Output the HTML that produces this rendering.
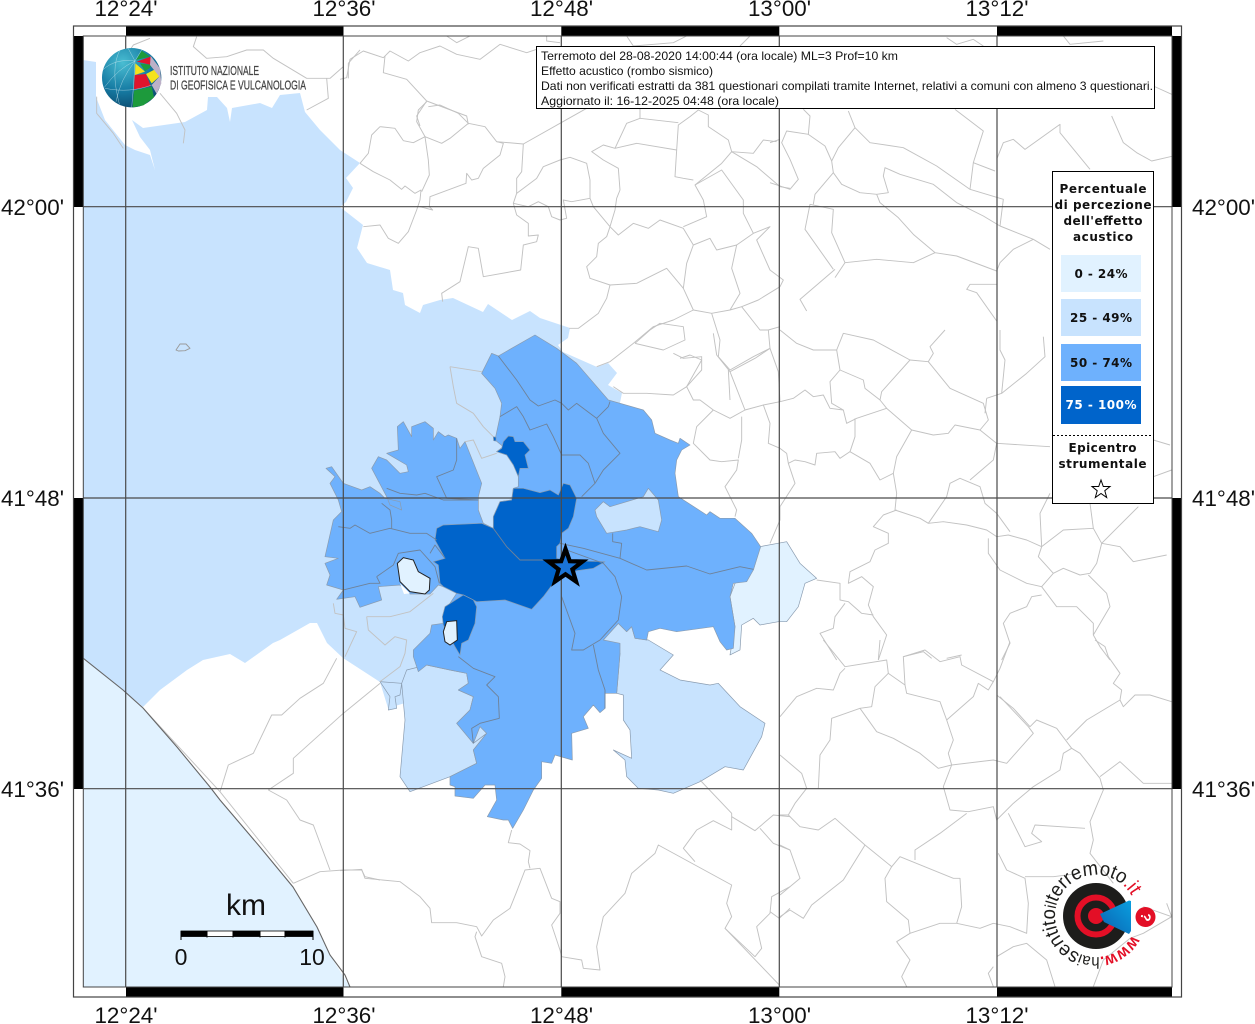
<!DOCTYPE html>
<html><head><meta charset="utf-8"><title>Terremoto</title>
<style>
html,body{margin:0;padding:0;background:#fff}
svg{display:block;font-family:"Liberation Sans",sans-serif}
.l path{fill:none;stroke:#c2c2c2;stroke-width:.95;vector-effect:non-scaling-stroke;stroke-linejoin:round}
.c path{fill:none;stroke:#6f8299;stroke-width:.9;vector-effect:non-scaling-stroke;stroke-linejoin:round}
.f path{stroke:#8a9cb0;stroke-width:.7;vector-effect:non-scaling-stroke;stroke-linejoin:round}
.ax{font-size:22.4px;fill:#111}
.lg{font-family:"DejaVu Sans",sans-serif;font-weight:bold;font-size:12px;text-anchor:middle;fill:#111}
.tb{font-size:12px;fill:#111}
</style></head><body>
<svg width="1255" height="1024" viewBox="0 0 1255 1024" xmlns="http://www.w3.org/2000/svg">
<defs>
<clipPath id="mc"><rect x="83" y="36" width="1089" height="951"/></clipPath>
<radialGradient id="gb" cx=".35" cy=".25" r=".85"><stop offset="0" stop-color="#49bdd2"/><stop offset=".55" stop-color="#167ba3"/><stop offset="1" stop-color="#0a4468"/></radialGradient>
<linearGradient id="wd" x1="0" x2="1" y1="1" y2="0"><stop offset="0" stop-color="#0b62b0"/><stop offset="1" stop-color="#0a9fe0"/></linearGradient>
<path id="arc" d="M1132.2,935.2 A41,41 0 1 1 1132.5,897.4"/>
</defs>
<rect width="1255" height="1024" fill="#fff"/>
<g clip-path="url(#mc)">
<path d="M83,658 123,690 143,708 177,747 210,787 220,800 260,847 293,887 317,927 330,955 350,987 83,987Z" fill="#e1f2ff"/>
<path fill="#c8e3fe" d="M83,60 96,62 96,97 105,120 125,145 135,150 150,155 155,170 150,150 140,137 132,120 143,128 185,122 207,110 208,97 217,97 227,108 230,122 232,108 260,103 272,108 280,95 300,93 305,112 320,130 340,150 360,163 346,178 353,188 346,202 340,207 363,225 357,248 367,263 390,270 393,290 403,293 405,305 420,313 423,305 440,300 453,298 483,312 488,304 512,320 530,311 540,318 570,328 568,338 558,345 563,352 597,367 608,363 617,373 608,385 622,393 600,500 590,600 450,690 388,708 380,682 343,658 327,643 317,623 310,623 280,640 273,643 245,663 230,654 203,660 187,670 160,690 143,707 123,690 83,658Z"/>
<g transform="translate(310,320) scale(.33333)">
<g class="f">
<path fill="#c8e3fe" stroke="none" d="M485,1225 515,1215 535,1240 490,1290Z"/>
<path fill="#c8e3fe" d="M290,1050 350,1035 420,1050 470,1060 475,1090 445,1110 490,1130 480,1170 440,1210 490,1270 530,1240 490,1290 500,1330 420,1370 300,1415 270,1370 285,1200 275,1090Z"/>
<path fill="#c8e3fe" d="M210,1085 275,1090 270,1125 255,1130 260,1165 235,1170 240,1130Z"/>
<path fill="#c8e3fe" d="M880,960 925,910 950,935 965,920 975,955 1015,960 1090,1005 1050,1050 1110,1080 1200,1095 1225,1090 1290,1160 1365,1210 1355,1250 1300,1350 1245,1340 1170,1385 1090,1420 1045,1410 985,1405 950,1370 945,1320 910,1290 965,1315 960,1230 940,1200 940,1125 920,1120 930,1000Z"/>
<path fill="#e1f2ff" d="M1350,680 1430,665 1470,730 1520,775 1485,790 1465,860 1430,905 1405,905 1350,915 1330,895 1295,915 1290,990 1260,1005 1275,920 1260,830 1275,790 1330,750Z"/>
<path fill="#6eb1fd" d="M545,100 565,108 675,45 740,85 800,130 895,240 1000,270 1025,300 1035,340 1080,360 1105,370 1110,355 1140,375 1115,390 1100,420 1095,460 1105,530 1190,585 1200,575 1230,595 1275,595 1325,640 1352,680 1330,750 1310,785 1270,790 1260,830 1275,920 1270,985 1250,990 1230,965 1210,920 1100,935 1050,925 1015,935 1010,960 975,955 965,920 950,935 925,910 880,960 930,970 930,1000 920,1120 885,1120 885,1165 870,1178 850,1155 820,1190 835,1225 785,1240 787,1320 735,1305 725,1330 695,1325 695,1375 670,1410 640,1470 608,1525 595,1500 580,1500 532,1490 560,1440 555,1395 525,1395 490,1435 435,1428 435,1400 420,1395 420,1370 500,1330 490,1290 530,1240 510,1220 490,1270 440,1210 480,1170 490,1130 445,1110 475,1090 470,1060 420,1050 350,1035 325,1055 310,1010 310,990 360,940 365,915 400,910 400,880 440,820 400,800 385,795 360,822 300,822 270,795 205,800 215,840 150,862 135,830 80,838 100,810 50,795 60,765 45,730 85,715 45,710 70,600 95,575 85,540 60,490 75,470 48,445 65,440 100,490 155,510 180,500 210,520 225,535 270,545 275,570 240,555 230,530 185,445 205,410 230,420 270,460 295,455 290,435 230,400 265,390 262,320 280,305 305,350 305,320 345,305 370,325 370,360 385,335 405,350 415,345 440,355 450,385 465,365 515,490 505,530 505,570 520,610 550,625 550,590 570,545 605,540 610,505 625,500 625,470 615,440 590,400 560,395 580,380 555,360 570,290 575,250 555,205 515,160Z"/>
<path fill="#c8e3fe" d="M855,570 880,545 900,560 1000,530 1015,505 1045,540 1055,600 1045,635 990,620 950,630 890,640 860,590Z"/>
<path fill="#0064cb" d="M380,625 400,615 515,610 550,625 550,590 570,545 605,540 610,505 640,505 690,518 720,510 745,525 760,490 780,495 800,535 790,590 775,625 755,640 750,670 740,680 740,715 780,722 885,725 850,745 800,752 730,790 700,830 665,868 585,840 500,845 460,825 440,820 400,800 390,790 385,735 370,725 405,715 375,660Z"/>
<path fill="#0064cb" d="M405,860 460,825 490,840 500,860 495,910 475,960 455,970 450,1005 435,980 400,915 397,890Z"/>
<path fill="#0064cb" d="M595,348 610,350 615,365 640,365 660,390 645,405 655,445 630,445 625,470 610,435 590,405 560,395 575,385 580,365Z"/>
<path fill="#0064cb" d="M550,350 558,352 558,363 551,362Z"/>
</g>
<path d="M262,730 280,713 310,720 325,755 360,775 358,810 345,822 300,815 270,785Z" fill="#e1f2ff" stroke="#222" stroke-width="1" vector-effect="non-scaling-stroke"/>
<path d="M270,790 300,820 282,822Z" fill="#fff"/>
<path d="M400,935 410,905 440,902 442,960 420,975 405,965Z" fill="#e1f2ff" stroke="#222" stroke-width="1" vector-effect="non-scaling-stroke"/>
<g class="c">
<path d="M565,108 620,180 660,240 685,258 735,240 755,250 775,270 800,250 860,295 895,260 900,245"/>
<path d="M570,290 620,260 640,290 660,330 710,312 730,350 755,405 810,405 835,430 855,490 815,530"/>
<path d="M860,295 880,340 930,400 880,450 855,490"/>
<path d="M440,355 440,420 430,450 380,470 410,535 505,540"/>
<path d="M230,505 270,520 320,525 345,520 400,540 440,540 505,540"/>
<path d="M85,620 120,625 135,615 180,640 240,625 300,640 350,640 380,660"/>
<path d="M245,625 245,600 240,570 215,550"/>
<path d="M200,770 250,735 265,700 330,690 375,740 388,790"/>
<path d="M200,770 210,790 180,790 100,810"/>
<path d="M360,700 375,675 405,715"/>
<path d="M750,670 820,685 930,715 1010,750 1130,738 1200,762 1290,740 1330,748"/>
<path d="M930,715 935,670 908,665 908,640"/>
<path d="M770,690 880,730 915,770 935,830 925,900 870,960 820,990 785,990 795,940 755,830"/>
<path d="M850,975 865,1050 885,1110 885,1165"/>
<path d="M550,625 590,680 630,720 700,720"/>
<path d="M445,1010 490,1045 555,1070 530,1095 565,1130 568,1195 510,1210 485,1225 490,1270"/>
</g>
<g class="l">
<path d="M420,140 430,200 440,250 490,280 520,320 550,350"/>
<path d="M420,140 515,155"/>
<path d="M465,365 490,360 515,415 560,400"/>
<path d="M70,850 75,880 100,885 105,925 140,935 105,1010"/>
<path d="M170,890 175,930 225,975 255,950 290,960 285,1000 270,1040 210,1085"/>
<path d="M170,890 240,890 300,875 370,820"/>
<path d="M-402,90 -390,72 -372,72 -360,85 -375,92 -395,93Z" style="stroke:#9a9a9a"/>
</g>
</g>
<g class="l" transform="translate(340,100) scale(.33333)">
<path d="M60,190 100,215 150,240 185,268 195,258 225,280 243,270 240,300 230,330 205,395 175,430 145,415 120,375 70,380"/>
<path d="M60,190 85,160 95,105 120,80 165,85 190,122 220,128 255,110 265,180 268,225 245,275"/>
<path d="M255,110 230,65 235,30 260,5"/>
<path d="M255,110 305,130 330,115 385,70 355,40 300,15 265,20"/>
<path d="M385,70 435,80 470,125 550,132 660,70 740,25"/>
<path d="M470,125 490,130 480,165 430,205 415,235 395,240 380,220 378,250 270,290 268,320 278,330 240,320"/>
<path d="M550,132 545,215 530,235 530,280 520,310 530,345 565,370 565,408 595,405 590,425 550,435 542,510 430,530 415,445 385,440 360,545 305,580 308,605"/>
<path d="M520,310 565,320 595,305 625,320 635,350 660,360 680,355 670,300 695,305 750,295 760,320 810,380 825,330 830,295 840,270 835,205 790,180 755,155 790,135 825,145 890,130 1010,150"/>
<path d="M530,280 590,235 610,200 660,180 690,172 740,190 750,240 750,295"/>
<path d="M810,380 835,405 880,370 925,385 960,360 1030,385 1060,435 1110,415 1130,450 1190,435 1240,400 1210,340 1210,300 1145,210 1065,255 1090,300 1100,350 1030,380"/>
<path d="M810,380 800,410 775,430 770,470 740,500 750,535 810,555 890,550 980,505 1030,565 1060,630 1000,660 940,680 880,730 810,785 770,800"/>
<path d="M810,555 800,595 775,640 715,685 688,685"/>
<path d="M1060,630 1115,640 1170,630 1200,580 1175,505 1190,435"/>
<path d="M1060,435 1040,490 1030,565"/>
<path d="M1115,640 1140,720 1135,770 1170,810 1240,770 1290,745 1285,690 1320,680"/>
<path d="M1170,630 1205,620 1260,690 1285,690"/>
<path d="M1240,400 1290,380 1250,420 1290,510 1330,540 1320,560 1255,600 1205,620"/>
<path d="M1010,150 1005,230 1030,235 1060,240"/>
<path d="M1010,150 1015,75 1050,50 1075,30 1105,45 1105,80 1165,120 1175,155 1145,190 1065,255"/>
<path d="M1175,155 1240,160 1270,120 1310,125"/>
<path d="M1175,155 1250,200 1320,260 1350,265"/>
<path d="M825,145 860,70 900,55 1015,68"/>
<path d="M900,25 900,55"/>
<path d="M885,730 970,750 1035,720 1030,680 960,670 930,690 885,730"/>
<path d="M1000,760 1030,775 1085,770 1085,810 1040,860 1000,885 920,880 850,880 820,860"/>
<path d="M1165,810 1170,900"/>
</g>
<g class="l" transform="translate(770,36) scale(.33333)">
<path d="M100,220 120,240 115,295 50,285 35,320 60,370 85,430 60,460 0,440"/>
<path d="M115,295 165,330 185,375"/>
<path d="M235,225 255,275 205,335 185,375 190,410 135,475 130,505"/>
<path d="M255,275 300,320 400,335 500,390 600,460 700,490 690,570"/>
<path d="M555,220 640,285 610,380 600,460"/>
<path d="M610,380 675,405"/>
<path d="M190,410 215,445 270,470 320,475 355,470 340,420 345,395 390,415 490,445 560,500 640,540 690,570 740,590 790,610 840,640"/>
<path d="M320,475 330,500 385,545 430,595 495,650 560,660 680,705"/>
<path d="M495,650 430,680 320,670 225,680 195,725"/>
<path d="M225,680 185,590 190,520 120,505 105,580 190,700"/>
<path d="M195,700 90,790 110,825"/>
<path d="M680,370 700,320 730,310 765,340 870,265 870,290 960,400"/>
<path d="M680,705 690,680 730,640 790,610"/>
<path d="M1025,240 1060,320 1100,350 1145,375 1210,360"/>
<path d="M1150,150 1205,175"/>
<path d="M680,745 600,745 590,760 620,770 680,855"/>
<path d="M0,320 30,310"/>
<path d="M880,0 900,25 1000,15"/>
<path d="M530,5 560,25 610,10 640,30"/>
</g>
<g class="l" transform="translate(680,330) scale(.33333)">
<path d="M300,0 350,40 400,60 470,60 490,10 580,30 690,90 745,95 760,70 750,50 795,0"/>
<path d="M470,60 480,120 550,150 555,175 600,210 620,235 695,300 760,315 805,310 825,285 900,300 950,340"/>
<path d="M690,90 605,185 600,210"/>
<path d="M745,95 810,175 910,220 925,270 900,300"/>
<path d="M480,120 450,155 455,220 490,240 500,280 530,265 620,235"/>
<path d="M525,265 525,320 510,365 570,400 600,450 640,430 650,380 695,300"/>
<path d="M300,215 340,205 375,180 400,200 430,195 450,235 490,240"/>
<path d="M510,365 480,385 465,365 410,370 405,405 375,395 345,390 325,400 320,370 300,355 265,340 270,280 250,225 195,240 150,125 110,75 100,10"/>
<path d="M250,225 300,215"/>
<path d="M150,125 225,85 270,55 295,125 300,215"/>
<path d="M195,240 150,265 100,240 60,210 40,210 20,170 65,90 30,75 0,85"/>
<path d="M100,240 50,290 40,340 90,390 125,395 175,390 170,420 135,470 170,540 165,560"/>
<path d="M185,260 185,330 175,385"/>
<path d="M325,400 345,460 300,530 300,570 270,640"/>
<path d="M640,430 650,490 645,540 720,565 745,580 790,575 860,585 920,600 950,620 985,615 1040,630 1085,650"/>
<path d="M650,540 610,555 580,590 625,610 625,640 585,660 570,695 510,725 505,760 545,740 580,770 565,825 580,860 620,915 595,990"/>
<path d="M745,580 800,500 810,460 840,445 900,470 915,520 950,550 990,605"/>
<path d="M870,450 940,390 950,340 1110,350"/>
<path d="M925,625 925,670 960,720 1040,760 1085,770 1120,730 1075,680 1085,650 1150,600 1240,595 1265,640 1250,700 1230,730 1200,735 1150,715 1120,730"/>
<path d="M1085,650 1080,550 1110,490"/>
<path d="M1240,595 1230,520"/>
<path d="M1265,640 1375,530"/>
<path d="M1265,640 1320,650 1360,695 1460,675"/>
<path d="M1085,770 1130,830 1190,830 1240,880 1240,915 1290,830 1280,790 1225,735"/>
<path d="M1085,795 1055,800 1040,830 990,850 970,880 990,940 965,990"/>
<path d="M1240,915 1260,950 1290,990"/>
<path d="M410,750 480,760 480,810 505,815 545,850 580,855"/>
<path d="M495,820 465,860 460,895 420,910 470,990"/>
<path d="M920,205 965,190 1040,130 1095,80 1090,20"/>
<path d="M960,0 960,60 975,90 965,190"/>
<path d="M920,205 915,250"/>
<path d="M1420,330 1470,345"/>
<path d="M1420,440 1475,420"/>
<path d="M670,980 730,965 755,985"/>
<path d="M800,985 845,975"/>
</g>
<g class="l" transform="translate(780,640) scale(.33333)">
<path d="M130,0 195,80 320,60 325,100 375,135 370,50 435,30 480,65 540,50 545,75 640,125 660,85 690,5"/>
<path d="M0,230 50,170 110,145 160,150 180,100 195,85"/>
<path d="M325,100 285,140 275,200 240,205 155,235 150,300 120,345 115,445"/>
<path d="M240,205 290,275 340,295 420,340 475,385 515,375 640,360 680,370 760,280 745,260 660,170"/>
<path d="M375,135 380,160 480,185 500,240 520,300 505,340 515,375 490,440 510,510 565,515 640,500 650,540 700,490 760,440 840,390 850,340 875,325"/>
<path d="M500,240 580,170 595,130 625,150 640,125"/>
<path d="M650,165 700,205 750,260 770,240 830,265 875,325 900,340 960,415 970,450 930,545 940,600 930,640 1000,730"/>
<path d="M860,300 920,240 1020,180 1025,150 1000,130 1020,100 985,50 975,20 945,0"/>
<path d="M1020,180 1030,200 1065,165 1110,165 1175,185"/>
<path d="M960,410 1020,365 1090,430 1175,430"/>
<path d="M0,345 65,400 80,445 45,490 25,525 0,525"/>
<path d="M25,525 60,560 115,570 165,535 255,615 335,680 315,715 320,785 385,840 390,880 480,850 530,850 600,865 640,850 690,860 740,880 745,790 735,715 680,690 655,640"/>
<path d="M735,710 820,710 900,700"/>
<path d="M255,615 190,720 95,795 70,835 30,810 0,830"/>
<path d="M0,615 30,630 60,715 0,765"/>
<path d="M335,680 360,650 520,715 540,715 545,800 530,850"/>
<path d="M405,660 405,630 480,580 560,520"/>
<path d="M390,880 350,905 390,960 365,1010 380,1040"/>
<path d="M685,520 735,620 785,605 755,580 765,555 915,565"/>
<path d="M650,950 700,920 740,910 800,960 825,1040"/>
<path d="M1090,800 1175,830 1160,790"/>
<path d="M1175,830 1090,880 1050,895 970,960 940,1040"/>
<path d="M640,980 625,1000 640,1040"/>
<path d="M295,60 300,0"/>
</g>
<g class="l" transform="translate(340,780) scale(.33333)">
<path d="M0,272 65,268 75,295 180,305 240,350 270,385 275,428 350,428 410,440 425,468 460,420 510,385 530,335 555,270 600,265 635,355 660,365 660,400 635,435 660,510 665,530 725,540 730,565 780,570 770,500 790,410 855,340 875,280 945,220 955,195 1175,315 1160,370 1175,410 1155,445 1318,615"/>
<path d="M515,150 505,188 540,192 570,212 565,245 570,265"/>
<path d="M410,455 405,470 425,530 485,550 495,590 490,620"/>
<path d="M1080,0 1175,100 1175,150 1120,122 1070,150 1030,205 1065,245"/>
<path d="M1175,110 1245,152 1300,105 1350,110"/>
<path d="M1260,145 1300,190 1350,210"/>
<path d="M1155,445 1245,530 1265,505 1250,440 1290,400 1295,350 1350,320"/>
<path d="M1290,395 1318,415 1350,385"/>
</g>
<g class="l" transform="translate(60,640) scale(.33333)">
<path d="M830,55 790,130 720,175 665,225 635,225 580,340 505,375 485,440 480,455"/>
<path d="M960,130 850,220 700,355 700,400 625,450"/>
<path d="M625,450 680,480 720,540 760,555 810,690"/>
<path d="M700,730 780,695 850,690 905,690 915,710 960,720"/>
<path d="M250,205 480,455 700,730"/>
</g>
<g class="l" transform="translate(340,36) scale(.33333)">
<path d="M0,130 20,125 30,70 70,45 130,65 150,45 205,75 240,50 300,30 350,55 420,70 480,25 560,50 590,40"/>
<path d="M135,60 130,110 200,130 260,195"/>
<path d="M260,195 230,240 240,270"/>
<path d="M260,195 380,240 385,265"/>
<path d="M320,0 350,20 390,0"/>
<path d="M620,0 620,15 660,20"/>
<path d="M860,0 880,30 1000,20 1040,0"/>
<path d="M1200,30 1230,0"/>
</g>
<g class="l" transform="translate(60,0) scale(.33333)">
<path d="M200,165 220,135 270,115"/>
<path d="M410,110 400,140 440,175 500,170 560,150 610,150 640,175 740,235 810,235 850,200"/>
<path d="M800,235 805,295 740,330"/>
<path d="M865,235 865,190 900,150"/>
<path d="M300,280 350,340 375,390 370,430"/>
<path d="M110,290 110,340 160,400 190,445"/>
</g>
<path d="M83,658 123,690 143,708 177,747 210,787 220,800 260,847 293,887 317,927 330,955 345,975 350,987" fill="none" stroke="#666" stroke-width="1.1"/>
<g stroke="#4a4a4a" stroke-width="1.2" fill="none">
<path d="M125.7,36V987M343.3,36V987M561.3,36V987M779.3,36V987M997,36V987M83,206.7H1172M83,498H1172M83,788.7H1172"/>
</g>
</g>
<g>
<rect x="126" y="26.5" width="217.5" height="9.5" fill="#000"/><rect x="561.3" y="26.5" width="218" height="9.5" fill="#000"/><rect x="997" y="26.5" width="175" height="9.5" fill="#000"/>
<rect x="126" y="987" width="217.5" height="9.5" fill="#000"/><rect x="561.3" y="987" width="218" height="9.5" fill="#000"/><rect x="997" y="987" width="175" height="9.5" fill="#000"/>
<rect x="73.8" y="36" width="9.5" height="171" fill="#000"/><rect x="73.8" y="498" width="9.5" height="291" fill="#000"/>
<rect x="1172" y="36" width="9.5" height="171" fill="#000"/><rect x="1172" y="498" width="9.5" height="291" fill="#000"/>
<rect x="73.5" y="26" width="1108" height="971" fill="none" stroke="#444" stroke-width="1.2"/>
<rect x="83.3" y="36" width="1088.7" height="951" fill="none" stroke="#444" stroke-width="1"/>
</g>
<g class="ax" text-anchor="middle">
<text x="126" y="16">12°24'</text><text x="344" y="16">12°36'</text><text x="561.5" y="16">12°48'</text><text x="779.5" y="16">13°00'</text><text x="997" y="16">13°12'</text>
<text x="126" y="1023">12°24'</text><text x="344" y="1023">12°36'</text><text x="561.5" y="1023">12°48'</text><text x="779.5" y="1023">13°00'</text><text x="997" y="1023">13°12'</text>
</g>
<g class="ax"><text x="64" y="215" text-anchor="end">42°00'</text><text x="64" y="506" text-anchor="end">41°48'</text><text x="64" y="797" text-anchor="end">41°36'</text>
<text x="1192" y="215">42°00'</text><text x="1192" y="506">41°48'</text><text x="1192" y="797">41°36'</text></g>
<g transform="translate(60,0) scale(.33333)">
<circle cx="215" cy="233" r="89" fill="url(#gb)"/>
<path fill="#1d9a3c" d="M228,180 245,152 270,170Z"/>
<path fill="#e0142d" d="M230,185 272,170 275,195Z"/>
<path fill="#f4e21c" d="M226,190 255,215 225,225Z"/>
<path fill="#1d9a3c" d="M240,190 275,195 268,205 255,213Z"/>
<path fill="#f4e21c" d="M258,222 295,203 300,228 275,250Z"/>
<path fill="#e0142d" d="M224,225 258,222 272,258 222,268Z"/>
<path fill="#bcb1c8" d="M272,168 300,205 304,250 290,282 275,255 298,230 270,195Z"/>
<path fill="#1d9a3c" d="M222,272 275,260 282,292 250,316 218,322Z"/>
<g fill="none" stroke="#d8eef4" stroke-width="1" vector-effect="non-scaling-stroke">
<path d="M205,146 Q215,165 225,183 M225,183 Q175,205 133,262 M225,183 Q165,175 128,210 M225,183 Q222,255 215,322 M225,183 Q180,240 168,305 M180,150 Q150,205 178,312 M135,265 Q210,280 275,255 M225,183 L245,150"/>
</g>
</g>
<text x="170" y="75" font-size="13.2" fill="#444" stroke="#444" stroke-width=".25" textLength="89" lengthAdjust="spacingAndGlyphs">ISTITUTO NAZIONALE</text>
<text x="170" y="89.5" font-size="13.2" fill="#444" stroke="#444" stroke-width=".25" textLength="136" lengthAdjust="spacingAndGlyphs">DI GEOFISICA E VULCANOLOGIA</text>
<rect x="536.5" y="46.5" width="618" height="62" fill="#fff" stroke="#000" stroke-width="1"/>
<g class="tb">
<text x="541" y="60" textLength="357" lengthAdjust="spacingAndGlyphs">Terremoto del 28-08-2020 14:00:44 (ora locale) ML=3 Prof=10 km</text>
<text x="541" y="75" textLength="172" lengthAdjust="spacingAndGlyphs">Effetto acustico (rombo sismico)</text>
<text x="541" y="90" textLength="612" lengthAdjust="spacingAndGlyphs">Dati non verificati estratti da 381 questionari compilati tramite Internet, relativi a comuni con almeno 3 questionari.</text>
<text x="541" y="105" textLength="238" lengthAdjust="spacingAndGlyphs">Aggiornato il: 16-12-2025 04:48 (ora locale)</text>
</g>
<rect x="1052.5" y="171.5" width="101" height="332" fill="#fff" stroke="#000" stroke-width="1"/>
<g class="lg">
<text x="1103" y="193" textLength="87" lengthAdjust="spacing">Percentuale</text>
<text x="1103" y="209" textLength="97" lengthAdjust="spacing">di percezione</text>
<text x="1103" y="225" textLength="79" lengthAdjust="spacing">dell'effetto</text>
<text x="1103" y="241" textLength="60" lengthAdjust="spacing">acustico</text>
</g>
<rect x="1061" y="255" width="80" height="37" fill="#e1f2ff"/>
<rect x="1061" y="299" width="80" height="37" fill="#c8e3fe"/>
<rect x="1061" y="344" width="80" height="37" fill="#6eb1fd"/>
<rect x="1061" y="386" width="80" height="38" fill="#0064cb"/>
<g class="lg">
<text x="1101" y="278" textLength="53" lengthAdjust="spacing">0 - 24%</text>
<text x="1101" y="322" textLength="62" lengthAdjust="spacing">25 - 49%</text>
<text x="1101" y="367" textLength="62" lengthAdjust="spacing">50 - 74%</text>
<text x="1101" y="409" textLength="71" lengthAdjust="spacing" style="fill:#fff">75 - 100%</text>
<text x="1102.5" y="452" textLength="68" lengthAdjust="spacing">Epicentro</text>
<text x="1102.5" y="468" textLength="88" lengthAdjust="spacing">strumentale</text>
</g>
<path d="M1053,435.5H1153" stroke="#000" stroke-width="1" stroke-dasharray="2 2"/>
<path d="M1101,480 1103.3,486.5 1110,486.5 1104.8,490.7 1106.7,497.5 1101,493.5 1095.3,497.5 1097.2,490.7 1092,486.5 1098.7,486.5Z" fill="#fff" stroke="#000" stroke-width="1"/>
<path d="M565.5,549 569.8,561.2 582.6,561.5 572.4,569.3 576.1,581.6 565.5,574.3 554.9,581.6 558.6,569.3 548.4,561.5 561.2,561.2Z" fill="#1a74d8" stroke="#000" stroke-width="4.2" stroke-miterlimit="10"/>
<text x="246" y="915" font-size="30" text-anchor="middle" fill="#111">km</text>
<rect x="181" y="931" width="132" height="5.5" fill="#fff" stroke="#000" stroke-width=".8"/>
<rect x="181" y="931" width="26.5" height="5.5" fill="#000"/><rect x="233" y="931" width="27" height="5.5" fill="#000"/><rect x="285" y="931" width="28" height="5.5" fill="#000"/>
<path d="M181,931V940M207,931V937.5M233,931V937.5M260,931V937.5M285,931V937.5M313,931V940" stroke="#000" stroke-width="1"/>
<text x="181" y="965" font-size="23" text-anchor="middle" fill="#111">0</text>
<text x="312" y="965" font-size="23" text-anchor="middle" fill="#111">10</text>
<circle cx="1096" cy="916" r="33" fill="#1d1d1b"/>
<circle cx="1096" cy="916" r="18.5" fill="none" stroke="#e30f26" stroke-width="6"/>
<circle cx="1096" cy="916" r="8" fill="#e30f26"/>
<path d="M1100,914 1129,900.5 1131,901 1131,931 1129,934 1104,922Z" fill="url(#wd)"/>
<circle cx="1145.500" cy="917" r="10" fill="#e30f26"/>
<text x="1145.5" y="921.5" font-size="14" font-weight="bold" fill="#fff" text-anchor="middle" transform="rotate(100 1145.5 917)">?</text>
<text font-size="20" fill="#1d1d1b"><textPath href="#arc" textLength="216" lengthAdjust="spacingAndGlyphs"><tspan fill="#e30f26" font-weight="bold" font-size="17">www.</tspan><tspan font-size="16">hai</tspan><tspan>sentito</tspan><tspan font-size="16">il</tspan><tspan>terremoto</tspan><tspan fill="#e30f26">.it</tspan></textPath></text>
</svg>
</body></html>
